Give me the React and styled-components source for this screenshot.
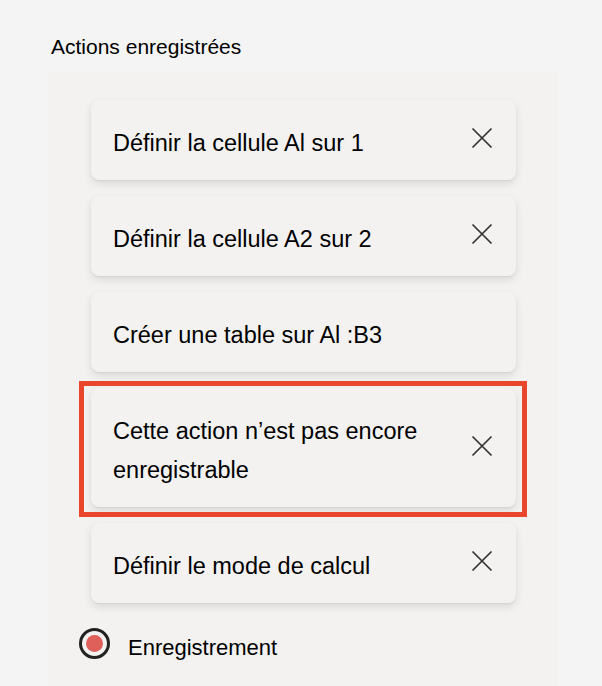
import React from "react";
import styled, { createGlobalStyle } from "styled-components";

const GlobalStyle = createGlobalStyle`
  html, body {
    margin: 0;
    padding: 0;
    background: #f4f4f4;
  }
  body {
    font-family: "Segoe UI", "Liberation Sans", Arial, sans-serif;
    color: #000;
  }
`;

const actions = [
  { id: 1, label: "Définir la cellule Al sur 1", removable: true },
  { id: 2, label: "Définir la cellule A2 sur 2", removable: true },
  { id: 3, label: "Créer une table sur Al :B3", removable: false },
  {
    id: 4,
    label: "Cette action n’est pas encore enregistrable",
    removable: true,
    highlighted: true,
  },
  { id: 5, label: "Définir le mode de calcul", removable: true },
];

function CloseIcon() {
  return (
    <svg width="22" height="22" viewBox="0 0 22 22" fill="none">
      <path
        d="M1.5 1.5 L20.5 20.5 M20.5 1.5 L1.5 20.5"
        stroke="#333"
        strokeWidth="1.7"
      />
    </svg>
  );
}

export default function App() {
  return (
    <>
      <GlobalStyle />
      <Page>
        <Heading>Actions enregistrées</Heading>
        <Panel>
          <ActionList>
            {actions.map((action) => (
              <ActionCard key={action.id} $highlighted={action.highlighted}>
                <ActionLabel>{action.label}</ActionLabel>
                {action.removable && (
                  <RemoveButton type="button" aria-label="Supprimer">
                    <CloseIcon />
                  </RemoveButton>
                )}
              </ActionCard>
            ))}
          </ActionList>
          <RecordRow>
            <RecordDot />
            <RecordLabel>Enregistrement</RecordLabel>
          </RecordRow>
        </Panel>
      </Page>
    </>
  );
}

const Page = styled.div`
  padding: 34px 44px 0 48px;
  height: 686px;
  box-sizing: border-box;
  overflow: hidden;
  display: flex;
  flex-direction: column;
`;

const Heading = styled.h2`
  margin: 0 0 13px 3px;
  font-size: 21px;
  font-weight: 400;
  line-height: 26px;
`;

const Panel = styled.section`
  flex: 1;
  background: #f3f2f1;
  padding: 27px 42px 0 43px;
`;

const ActionList = styled.div`
  display: flex;
  flex-direction: column;
  gap: 16px;
`;

const ActionCard = styled.div`
  position: relative;
  display: flex;
  align-items: center;
  gap: 30px;
  min-height: 80px;
  box-sizing: border-box;
  padding: 24px 23px 17px 22px;
  background: #f3f2f1;
  border-radius: 8px;
  box-shadow: 0 4px 8px rgba(0, 0, 0, 0.1), 0 0.5px 1.5px rgba(0, 0, 0, 0.06);

  ${({ $highlighted }) =>
    $highlighted &&
    `
    &::after {
      content: "";
      position: absolute;
      inset: -7px -11px -10px -12px;
      border: 5px solid #e8472e;
      pointer-events: none;
    }
  `}
`;

const ActionLabel = styled.span`
  flex: 1;
  font-size: 23.5px;
  line-height: 39px;
`;

const RemoveButton = styled.button`
  display: flex;
  padding: 0;
  margin-top: -11px;
  border: none;
  background: none;
  cursor: pointer;
`;

const RecordRow = styled.div`
  display: flex;
  align-items: flex-start;
  gap: 18px;
  margin: 23px 0 0 -12px;
`;

const RecordDot = styled.span`
  margin-top: 2px;
  width: 31px;
  height: 31px;
  box-sizing: border-box;
  border: 3px solid #222;
  border-radius: 50%;
  display: flex;
  align-items: center;
  justify-content: center;

  &::before {
    content: "";
    width: 17px;
    height: 17px;
    border-radius: 50%;
    background: #df5f5b;
  }
`;

const RecordLabel = styled.span`
  font-size: 22px;
  line-height: 30px;
  padding-top: 7px;
`;
